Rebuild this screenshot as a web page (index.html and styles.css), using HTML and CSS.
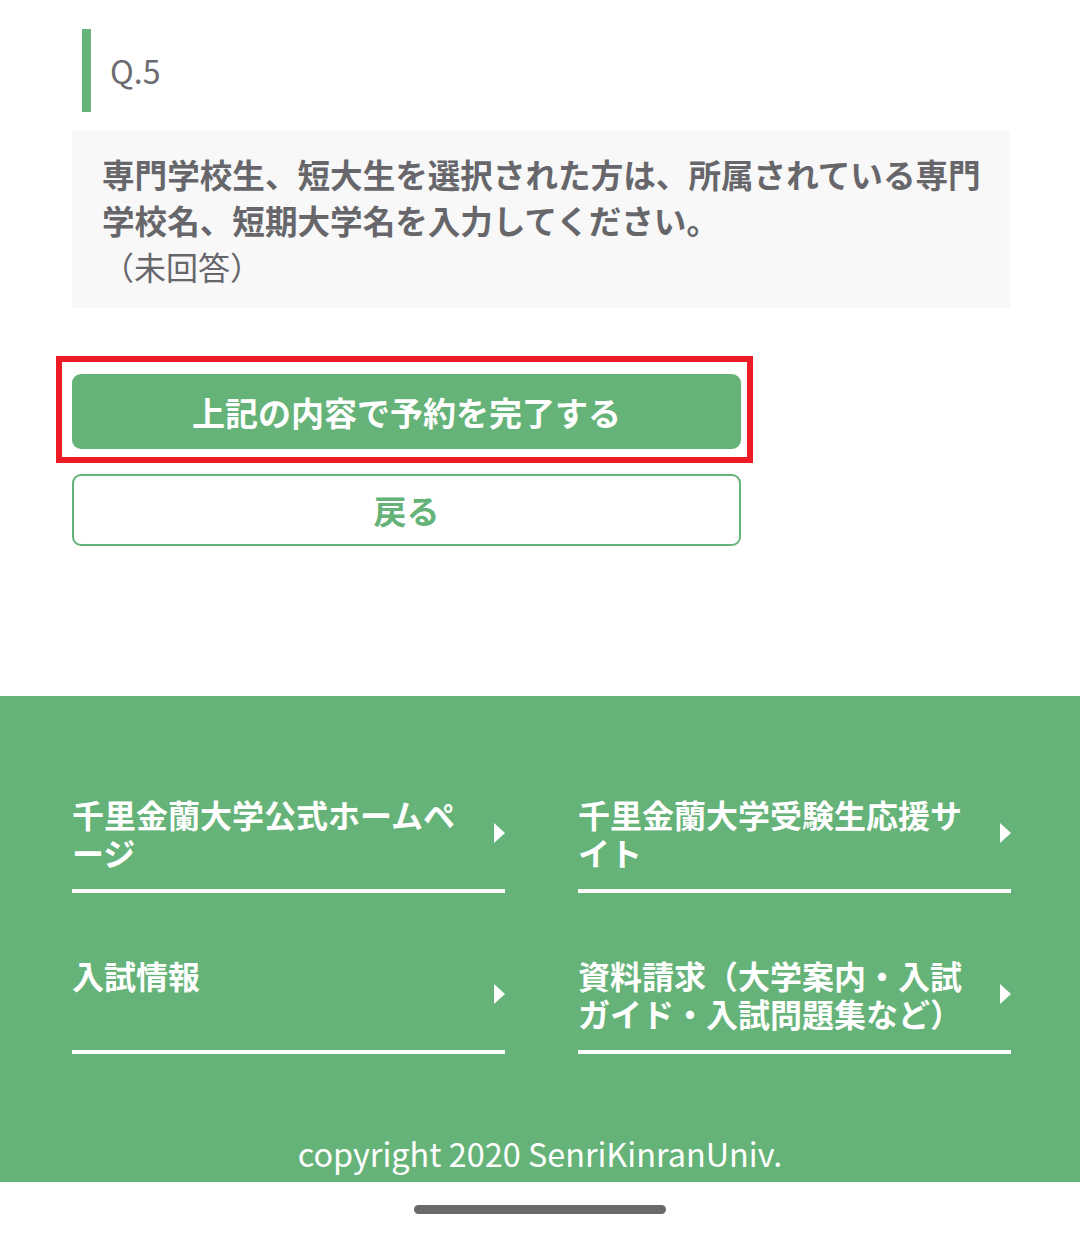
FILE: index.html
```html
<!DOCTYPE html>
<html lang="ja">
<head>
<meta charset="utf-8">
<title>予約内容確認</title>
<link rel="stylesheet" href="styles.css">
</head>
<body>
<main class="content">
  <h2 class="q-head">Q.5</h2>
  <div class="q-box">
    <p class="q-text">専門学校生、短大生を選択された方は、所属されている専門学校名、短期大学名を入力してください。</p>
    <p class="q-answer">（未回答）</p>
  </div>
  <div class="actions">
    <div class="highlight">
      <button class="btn btn-primary">上記の内容で予約を完了する</button>
    </div>
    <button class="btn btn-back">戻る</button>
  </div>
</main>
<footer class="footer">
  <nav class="links">
    <a class="link"><span class="link-text">千里金蘭大学公式ホームページ</span><span class="arrow"></span></a>
    <a class="link"><span class="link-text">千里金蘭大学受験生応援サイト</span><span class="arrow"></span></a>
    <a class="link"><span class="link-text">入試情報</span><span class="arrow"></span></a>
    <a class="link"><span class="link-text">資料請求（大学案内・入試ガイド・入試問題集など）</span><span class="arrow"></span></a>
  </nav>
  <p class="copyright">copyright 2020 SenriKinranUniv.</p>
</footer>
<div class="home-area"><div class="home-bar"></div></div>
</body>
</html>
```

FILE: styles.css
```css
* { box-sizing: border-box; }
html, body { margin: 0; padding: 0; background: #fff; }
body {
  width: 1080px;
  font-family: "Noto Sans CJK JP", "Noto Sans", sans-serif;
  color: #67676b;
}
.content {
  padding: 29px 70px 0 72px;
}
.q-head {
  margin: 0 0 19px 10px;
  height: 83px;
  border-left: 9px solid #65b378;
  padding-left: 19px;
  font-size: 32px;
  font-weight: 400;
  line-height: 83px;
  color: #6b6b70;
}
.q-box {
  background: #f8f8f8;
  padding: 20px 20px 18px 30px;
}
.q-text {
  margin: 0;
  font-size: 32.6px;
  font-weight: 700;
  line-height: 46px;
  color: #67676b;
}
.q-answer {
  margin: 0;
  font-size: 32px;
  font-weight: 400;
  line-height: 47px;
  color: #67676b;
}
.actions {
  margin-top: 66px;
  width: 669px;
  display: flex;
  flex-direction: column;
  gap: 25px;
}
.highlight {
  position: relative;
}
.highlight::after {
  content: "";
  position: absolute;
  top: -18px;
  left: -16px;
  right: -12px;
  bottom: -14px;
  border: 6px solid #ed1c24;
  pointer-events: none;
}
.btn {
  display: block;
  width: 669px;
  font-family: "Noto Sans CJK JP", sans-serif;
  font-size: 33px;
  font-weight: 700;
  border-radius: 9px;
  padding: 0;
  cursor: pointer;
}
.btn-primary {
  height: 75px;
  background: #65b378;
  border: none;
  color: #fff;
}
.btn-back {
  height: 72px;
  background: #fff;
  border: 2px solid #65b378;
  color: #65b378;
}
.footer {
  margin-top: 150px;
  background: #65b378;
  padding: 98px 69px 9px 72px;
  color: #fff;
}
.links {
  display: grid;
  grid-template-columns: 433px 433px;
  column-gap: 73px;
  row-gap: 62px;
}
.link {
  display: flex;
  align-items: center;
  gap: 20px;
  padding-bottom: 18px;
  border-bottom: 4px solid #fff;
  color: #fff;
  text-decoration: none;
}
.link-text {
  flex: 1;
  align-self: flex-start;
  font-size: 32px;
  font-weight: 700;
  line-height: 38px;
  padding-top: 1px;
}
.arrow {
  width: 0;
  height: 0;
  border-top: 10px solid transparent;
  border-bottom: 10px solid transparent;
  border-left: 11px solid #fff;
  flex: none;
}
.copyright {
  margin: 79px 0 0 -3px;
  text-align: center;
  font-size: 32.4px;
  font-weight: 400;
  line-height: 40px;
  color: #fff;
}
.home-area {
  height: 56px;
  display: flex;
  justify-content: center;
  padding-top: 23px;
}
.home-bar {
  width: 252px;
  height: 9px;
  border-radius: 5px;
  background: #6a6a6a;
}
```
